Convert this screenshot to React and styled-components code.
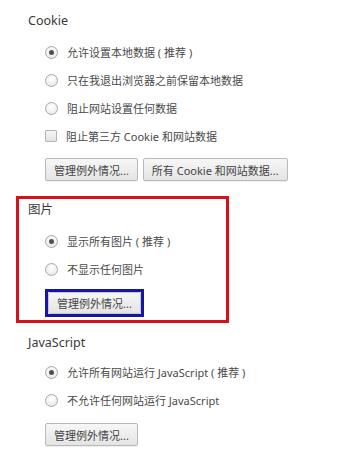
import React from "react";
import styled, { createGlobalStyle, css } from "styled-components";

const Global = createGlobalStyle`
  html, body { margin: 0; padding: 0; background: #fff; }
  body { font-family: "Noto Sans", "Noto Sans CJK SC", sans-serif; color: #444; }
`;

const Page = styled.div`
  width: 353px;
  height: 471px;
  padding: 12px 0 0 16px;
  box-sizing: border-box;
  display: flex;
  flex-direction: column;
  align-items: flex-start;
`;

const Section = styled.section`
  display: flex;
  flex-direction: column;
  align-items: flex-start;
  box-sizing: border-box;
  margin-top: ${(p) => p.$mt || 0}px;
  ${(p) =>
    p.$highlight
      ? css`
          width: 213px;
          border: 3px solid #d4121c;
          padding: 2px 0 3px 9px;
        `
      : css`
          padding-left: 12px;
        `}
`;

const Heading = styled.h3`
  margin: 0 0 ${(p) => p.$mb ?? 8}px 0;
  font-size: 12.5px;
  font-weight: 400;
  line-height: 18px;
  color: #3a3a3a;
`;

const Options = styled.div`
  display: flex;
  flex-direction: column;
  align-items: flex-start;
  padding-left: 17px;
`;

const Row = styled.label`
  display: flex;
  align-items: center;
  height: 28px;
  gap: 9px;
  font-size: 11px;
  color: #4a4a4a;
  white-space: pre;
`;

const Radio = styled.span`
  width: 11px;
  height: 11px;
  border-radius: 50%;
  border: 1px solid #a9a9a9;
  background: radial-gradient(circle at 50% 35%, #ffffff 0%, #ececec 70%, #d8d8d8 100%);
  display: flex;
  align-items: center;
  justify-content: center;
  flex: none;
  &::after {
    content: "";
    width: 5px;
    height: 5px;
    border-radius: 50%;
    background: ${(p) => (p.$checked ? "#505050" : "transparent")};
  }
`;

const Check = styled.span`
  width: 10px;
  height: 10px;
  border: 1px solid #b4b4b4;
  border-radius: 1px;
  background: linear-gradient(#f6f6f6, #e2e2e2);
  flex: none;
`;

const Buttons = styled.div`
  display: flex;
  gap: 5px;
  margin-top: ${(p) => p.$mt || 0}px;
`;

const Button = styled.button`
  height: 23px;
  padding: 0 8px;
  font-family: inherit;
  font-size: 11px;
  color: #444;
  border: 1px solid #b9b9b9;
  border-radius: 2px;
  background: linear-gradient(#f7f7f7, #e4e4e4);
  box-shadow: 0 1px 0 rgba(0, 0, 0, 0.06);
  cursor: pointer;
  white-space: nowrap;
`;

const Focus = styled.div`
  border: 3px solid #1515a8;
  display: flex;
  margin-top: 6px;
  & > button {
    height: 22px;
    border-color: #c8c8c8;
  }
`;

const rec = " ( 推荐 )";

export default function App() {
  return (
    <Page>
      <Global />
      <Section>
        <Heading>Cookie</Heading>
        <Options>
          <Row><Radio $checked /><span>允许设置本地数据{rec}</span></Row>
          <Row><Radio /><span>只在我退出浏览器之前保留本地数据</span></Row>
          <Row><Radio /><span>阻止网站设置任何数据</span></Row>
          <Row><Check /><span>阻止第三方 Cookie 和网站数据</span></Row>
          <Buttons $mt={8}>
            <Button>管理例外情况...</Button>
            <Button>所有 Cookie 和网站数据...</Button>
          </Buttons>
        </Options>
      </Section>

      <Section $highlight $mt={15}>
        <Heading>图片</Heading>
        <Options>
          <Row><Radio $checked /><span>显示所有图片{rec}</span></Row>
          <Row><Radio /><span>不显示任何图片</span></Row>
          <Focus>
            <Button>管理例外情况...</Button>
          </Focus>
        </Options>
      </Section>

      <Section $mt={11}>
        <Heading $mb={6}>JavaScript</Heading>
        <Options>
          <Row><Radio $checked /><span>允许所有网站运行 JavaScript{rec}</span></Row>
          <Row><Radio /><span>不允许任何网站运行 JavaScript</span></Row>
          <Buttons $mt={9}>
            <Button>管理例外情况...</Button>
          </Buttons>
        </Options>
      </Section>
    </Page>
  );
}
